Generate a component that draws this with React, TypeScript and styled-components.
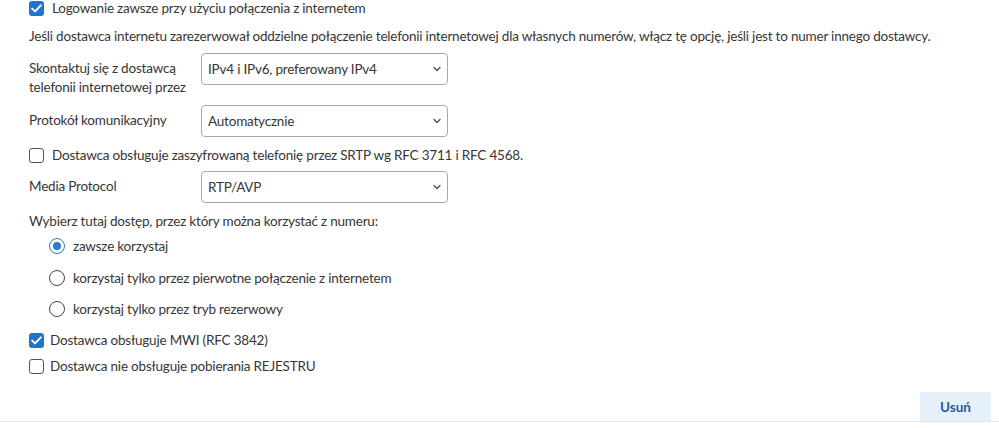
import styled, { createGlobalStyle } from 'styled-components';

const GlobalStyle = createGlobalStyle`
  html, body {
    margin: 0;
    padding: 0;
    background: #fff;
  }
  body {
    font-family: Lato, "Noto Sans", sans-serif;
    font-size: 13.5px;
    letter-spacing: -0.2px;
    color: #363636;
  }
`

const Page = styled.div`
  width: 999px;
  height: 428px;
  display: flex;
  flex-direction: column;
  box-sizing: border-box;
`

const Form = styled.div`
  padding: 0 0 0 29px;
  display: flex;
  flex-direction: column;
  flex: 1;
`

const CheckRow = styled.label<{ $top?: number; $gap?: number }>`
  display: flex;
  align-items: center;
  gap: ${p => p.$gap ?? 8}px;
  margin-top: ${p => p.$top ?? 0}px;
  height: 16px;
  line-height: 16px;
  white-space: nowrap;
`

const Box = styled.span<{ $checked?: boolean }>`
  width: 15px;
  height: 15px;
  box-sizing: border-box;
  border-radius: 3px;
  flex-shrink: 0;
  display: flex;
  align-items: center;
  justify-content: center;
  background: ${p => (p.$checked ? '#1f75cc' : '#fff')};
  border: ${p => (p.$checked ? 'none' : '1.5px solid #555')};
`

const Text = styled.p<{ $top: number }>`
  margin: ${p => p.$top}px 0 0 0;
  line-height: 18px;
  white-space: nowrap;
`

const FieldRow = styled.div<{ $top: number }>`
  display: flex;
  align-items: flex-start;
  margin-top: ${p => p.$top}px;
`

const FieldLabel = styled.div`
  width: 172px;
  padding-top: 6px;
  line-height: 19px;
  white-space: nowrap;
`

const SelectWrap = styled.div`
  position: relative;
  width: 247px;
  height: 32px;
`

const Select = styled.select`
  appearance: none;
  width: 100%;
  height: 100%;
  box-sizing: border-box;
  border: 1px solid #a8a8a8;
  border-radius: 4px;
  background: #fff;
  padding: 0 26px 0 6px;
  font: inherit;
  letter-spacing: inherit;
  color: #363636;
`

const Chevron = styled.svg`
  position: absolute;
  right: 7px;
  top: 13px;
  pointer-events: none;
`

const RadioGroup = styled.div`
  display: flex;
  flex-direction: column;
  gap: 15.5px;
  margin-top: 8px;
  padding-left: 20px;
`

const Radio = styled.span<{ $on?: boolean }>`
  width: 16px;
  height: 16px;
  box-sizing: border-box;
  border-radius: 50%;
  flex-shrink: 0;
  border: 1.5px solid ${p => (p.$on ? '#2b7bd0' : '#444')};
  display: flex;
  align-items: center;
  justify-content: center;
  &::after {
    content: '';
    display: ${p => (p.$on ? 'block' : 'none')};
    width: 8px;
    height: 8px;
    border-radius: 50%;
    background: #2b7bd0;
  }
`

const Footer = styled.div`
  display: flex;
  justify-content: flex-end;
  padding-right: 8px;
  border-bottom: 1px solid #e3e3e3;
  margin-bottom: 6px;
`

const DeleteBtn = styled.button`
  width: 71px;
  height: 29px;
  border: none;
  border-radius: 2px 2px 0 0;
  background: #e6f0fa;
  color: #1d5d9c;
  font-family: Lato, "Noto Sans", sans-serif;
  font-weight: 700;
  font-size: 13.5px;
  cursor: pointer;
`

function Check({ checked }: { checked?: boolean }) {
  return (
    <Box $checked={checked}>
      {checked && (
        <svg width="11" height="9" viewBox="0 0 11 9" fill="none">
          <path d="M1.2 4.6l2.9 2.8L9.8 1.4" stroke="#fff" strokeWidth="2" strokeLinecap="round" strokeLinejoin="round" />
        </svg>
      )}
    </Box>
  )
}

function Dropdown({ value }: { value: string }) {
  return (
    <SelectWrap>
      <Select defaultValue={value}>
        <option>{value}</option>
      </Select>
      <Chevron width="8" height="6" viewBox="0 0 8 6" fill="none">
        <path d="M1 1.5l3 3 3-3" stroke="#555" strokeWidth="1.4" strokeLinecap="round" strokeLinejoin="round" />
      </Chevron>
    </SelectWrap>
  )
}

export default function App() {
  return (
    <Page>
      <GlobalStyle />
      <Form>
        <CheckRow>
          <Check checked />
          Logowanie zawsze przy użyciu połączenia z internetem
        </CheckRow>
        <Text $top={11}>
          Jeśli dostawca internetu zarezerwował oddzielne połączenie telefonii internetowej dla własnych numerów, włącz tę opcję, jeśli jest to numer innego dostawcy.
        </Text>
        <FieldRow $top={8}>
          <FieldLabel>
            Skontaktuj się z dostawcą<br />telefonii internetowej przez
          </FieldLabel>
          <Dropdown value="IPv4 i IPv6, preferowany IPv4" />
        </FieldRow>
        <FieldRow $top={8}>
          <FieldLabel>Protokół komunikacyjny</FieldLabel>
          <Dropdown value="Automatycznie" />
        </FieldRow>
        <CheckRow $top={10}>
          <Check />
          Dostawca obsługuje zaszyfrowaną telefonię przez SRTP wg RFC 3711 i RFC 4568.
        </CheckRow>
        <FieldRow $top={8}>
          <FieldLabel>Media Protocol</FieldLabel>
          <Dropdown value="RTP/AVP" />
        </FieldRow>
        <Text $top={9}>Wybierz tutaj dostęp, przez który można korzystać z numeru:</Text>
        <RadioGroup>
          <CheckRow>
            <Radio $on />
            zawsze korzystaj
          </CheckRow>
          <CheckRow>
            <Radio />
            korzystaj tylko przez pierwotne połączenie z internetem
          </CheckRow>
          <CheckRow>
            <Radio />
            korzystaj tylko przez tryb rezerwowy
          </CheckRow>
        </RadioGroup>
        <CheckRow $top={15} $gap={6}>
          <Check checked />
          Dostawca obsługuje MWI (RFC 3842)
        </CheckRow>
        <CheckRow $top={10} $gap={6}>
          <Check />
          Dostawca nie obsługuje pobierania REJESTRU
        </CheckRow>
      </Form>
      <Footer>
        <DeleteBtn>Usuń</DeleteBtn>
      </Footer>
    </Page>
  )
}
